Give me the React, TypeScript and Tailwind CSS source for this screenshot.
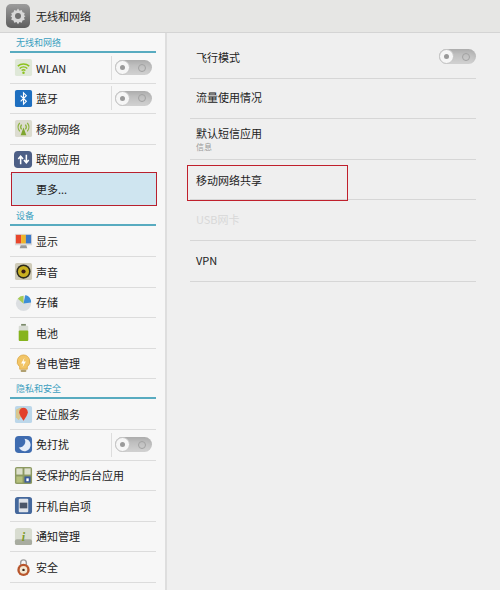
import type { ReactNode } from "react";

const Toggle = () => (
  <div className="w-[37px] h-[15px] rounded-full bg-gradient-to-b from-[#b4b4b4] to-[#d2d2d2] flex items-center justify-between shadow-inner">
    <div className="w-[15px] h-[15px] rounded-full bg-[#f6f6f6] border border-[#c4c4c4] flex items-center justify-center">
      <div className="w-[5px] h-[5px] rounded-full bg-[#9a9a9a]" />
    </div>
    <div className="w-[8px] h-[8px] rounded-full border border-[#a2a2a2] mr-[6px]" />
  </div>
);

const Icon = ({ children }: { children: ReactNode }) => (
  <svg viewBox="0 0 20 20" className="w-[19px] h-[19px] shrink-0">
    {children}
  </svg>
);

const icons: Record<string, ReactNode> = {
  wlan: (
    <>
      <rect x="1" y="1" width="18" height="18" rx="2" fill="#dfe8d8" />
      <path d="M4 8.500a9 9 0 0 1 12 0M6 11a6 6 0 0 1 8 0M8 13.200a3 3 0 0 1 4 0" fill="none" stroke="#8dc21f" strokeWidth="1.600" />
      <circle cx="10" cy="15.500" r="1.300" fill="#8dc21f" />
    </>
  ),
  bt: (
    <>
      <rect x="1" y="1" width="18" height="18" rx="2" fill="#1e6fc0" />
      <path d="M7 7l6 6-3 3V4l3 3-6 6" fill="none" stroke="#fff" strokeWidth="1.200" />
    </>
  ),
  mobile: (
    <>
      <rect x="1" y="1" width="18" height="18" rx="2" fill="#dcdcd0" />
      <path d="M10 9l-3 8h6z" fill="#7fa630" />
      <path d="M6 4a7 7 0 0 0 0 9M14 4a7 7 0 0 1 0 9M8 6a4 4 0 0 0 0 5M12 6a4 4 0 0 1 0 5" fill="none" stroke="#8bb23a" strokeWidth="1.300" />
    </>
  ),
  net: (
    <>
      <rect x="0" y="1" width="19" height="18" rx="4" fill="#4d5f86" />
      <path d="M7 15V7M4.500 9.500L7 6.500l2.500 3M13 5v8M10.500 10.500L13 13.500l2.500-3" fill="none" stroke="#fff" strokeWidth="1.600" />
    </>
  ),
  display: (
    <>
      <rect x="1" y="2" width="18" height="12" fill="#d9d9d9" />
      <rect x="2" y="3" width="5.500" height="9" fill="#e8462c" />
      <rect x="7.500" y="3" width="5" height="9" fill="#f0b429" />
      <rect x="12.500" y="3" width="5.500" height="9" fill="#3c78c8" />
      <path d="M7 14h6l1 3H6z" fill="#9a9a9a" />
    </>
  ),
  sound: (
    <>
      <rect x="1" y="1" width="18" height="18" rx="2" fill="#cfcbb8" />
      <circle cx="10" cy="10" r="7.500" fill="#2c2a1c" />
      <circle cx="10" cy="10" r="5.800" fill="#c8b020" />
      <circle cx="10" cy="10" r="2.200" fill="#3a1c14" />
    </>
  ),
  storage: (
    <>
      <circle cx="10" cy="11" r="8" fill="#dcdfe2" />
      <path d="M10 11L12 2a8 8 0 0 1 6 8z" fill="#3d8fd8" />
      <path d="M10 11L4 6a8 8 0 0 1 6-3z" fill="#a6cc52" />
    </>
  ),
  battery: (
    <>
      <rect x="7.500" y="1" width="5" height="2" fill="#7a8a6a" />
      <rect x="5" y="3" width="10" height="16" rx="1" fill="#d8dcd4" />
      <rect x="5" y="8" width="10" height="11" rx="1" fill="#86b41e" />
    </>
  ),
  power: (
    <>
      <path d="M10 1a7 7 0 0 0-4 12.500V16h8v-2.500A7 7 0 0 0 10 1z" fill="#f2c566" stroke="#d9a441" strokeWidth="0.800" />
      <path d="M11 4L7.500 10H10l-1 4 3.500-6H10z" fill="#fff" />
      <rect x="7" y="16.500" width="6" height="2.500" rx="1" fill="#b0a070" />
    </>
  ),
  location: (
    <>
      <rect x="1" y="1" width="18" height="18" rx="2" fill="#bcd7ea" />
      <path d="M2 5l6-3 2 6-5 8-3-3z" fill="#d8c890" />
      <path d="M10 3a4.500 4.500 0 0 1 4.500 4.500c0 3-4.500 9-4.500 9s-4.500-6-4.500-9A4.500 4.500 0 0 1 10 3z" fill="#e2402c" />
    </>
  ),
  dnd: (
    <>
      <rect x="1" y="1" width="18" height="18" rx="4" fill="#3f6cb0" />
      <path d="M11 4a6.500 6.500 0 1 1-6 9 6 6 0 0 0 6-9z" fill="#e6edf8" />
    </>
  ),
  protect: (
    <>
      <rect x="1" y="1" width="18" height="18" rx="2" fill="#8d9a62" />
      <rect x="2.500" y="2.500" width="6.500" height="6.500" fill="#dde0cc" />
      <rect x="11" y="2.500" width="6.500" height="6.500" fill="#dde0cc" />
      <rect x="2.500" y="11" width="6.500" height="6.500" fill="#b5c07c" />
      <rect x="11" y="11" width="6.500" height="6.500" fill="#3c5c9c" />
      <rect x="13" y="13" width="2.500" height="3" fill="#fff" />
    </>
  ),
  boot: (
    <>
      <rect x="1" y="1" width="18" height="18" rx="3" fill="#45689c" />
      <rect x="5" y="3" width="10" height="14" rx="1" fill="#e0e4ea" />
      <rect x="6" y="7" width="8" height="6" fill="#4c5668" />
    </>
  ),
  notify: (
    <>
      <rect x="1" y="1" width="18" height="18" rx="3" fill="#d8dcd0" />
      <rect x="1" y="13" width="18" height="6" rx="2" fill="#a8aca0" />
      <text x="10" y="15" textAnchor="middle" fontSize="13" fontStyle="italic" fontWeight="700" fontFamily="Liberation Serif, serif" fill="#7f9a2a">i</text>
    </>
  ),
  security: (
    <>
      <path d="M7 8V5a3 3 0 0 1 6 0v3" fill="none" stroke="#9a9a9a" strokeWidth="1.500" />
      <circle cx="10" cy="12.500" r="6.500" fill="#b8562c" />
      <circle cx="10" cy="12.500" r="4" fill="#f2e6d0" />
      <circle cx="10" cy="12.500" r="1.300" fill="#3a2418" />
    </>
  ),
};

const Row = ({ icon, label, toggle }: { icon: string; label: string; toggle?: boolean }) => (
  <div className="h-[30.6px] border-b border-[#dcdcdc] flex items-center pl-[4px] gap-[3px]">
    <Icon>{icons[icon]}</Icon>
    <span className="flex-1 text-[11px] text-[#222]">{label}</span>
    {toggle && (
      <div className="h-[24px] border-l border-[#dddddd] pl-[3px] pr-[4px] flex items-center">
        <Toggle />
      </div>
    )}
  </div>
);

const Section = ({ title, className }: { title: string; className?: string }) => (
  <div className={`h-[19px] border-b-[2px] border-[#58abc0] flex items-center pl-[6px] text-[9px] text-[#3c9fc0] ${className ?? ""}`}>
    {title}
  </div>
);

const PanelRow = ({ label, sub, dim, toggle, mark }: { label: string; sub?: string; dim?: boolean; toggle?: boolean; mark?: boolean }) => (
  <div className={`relative h-[40.6px] border-b border-[#d6d6d6] flex pl-[6px] ${sub ? "flex-col justify-start pt-[6px]" : mark ? "flex-col justify-start pt-[12px]" : "items-center justify-between pb-[2px]"}`}>
    <span className={`text-[11px] leading-[16px] ${dim ? "text-[#d8d8d8]" : "text-[#222]"}`}>{label}</span>
    {sub && <span className="text-[8px] leading-[12px] text-[#999]">{sub}</span>}
    {toggle && <Toggle />}
    {mark && <div className="absolute left-[-3px] top-[5px] w-[161px] h-[36px] border border-[#c0202c]" />}
  </div>
);

export default function App() {
  return (
    <div className="w-[500px] h-[590px] overflow-hidden flex flex-col bg-[#f4f4f4] font-['Noto_Sans_CJK_SC','Liberation_Sans',sans-serif]">
      <header className="h-[33px] shrink-0 bg-[#e6e6e4] border-b border-[#d4d4d4] flex items-center pl-[6px] gap-[6px]">
        <div className="w-[24px] h-[24px] rounded-[5px] bg-gradient-to-b from-[#9c9c9c] to-[#5e5e5e] flex items-center justify-center">
          <svg viewBox="0 0 24 24" className="w-[18px] h-[18px]">
            <path d="M12 2l2 3 3-1 1 3 3 1-1 3 2 1-2 2 1 3-3 1-1 3-3-1-2 3-2-3-3 1-1-3-3-1 1-3-2-2 2-1-1-3 3-1 1-3 3 1z" fill="#d8d8d8" />
            <circle cx="12" cy="12" r="4" fill="#707070" />
          </svg>
        </div>
        <span className="text-[11px] text-[#222]">无线和网络</span>
      </header>
      <div className="flex-1 flex min-h-0">
        <aside className="w-[167px] shrink-0 pl-[10px] pr-[9px] pt-[1px] bg-[#f7f7f7] border-r-[2px] border-[#dedede]">
          <Section title="无线和网络" />
          <Row icon="wlan" label="WLAN" toggle />
          <Row icon="bt" label="蓝牙" toggle />
          <Row icon="mobile" label="移动网络" />
          <Row icon="net" label="联网应用" />
          <div className="h-[34px] -mt-[3px] ml-[1px] -mr-[1px] bg-[#cfe5f0] border border-[#b8202e] flex items-center pl-[24px] text-[11px] text-[#222]">
            更多...
          </div>
          <Section title="设备" className="mt-[1px]" />
          <Row icon="display" label="显示" />
          <Row icon="sound" label="声音" />
          <Row icon="storage" label="存储" />
          <Row icon="battery" label="电池" />
          <Row icon="power" label="省电管理" />
          <Section title="隐私和安全" className="mt-[1px]" />
          <Row icon="location" label="定位服务" />
          <Row icon="dnd" label="免打扰" toggle />
          <Row icon="protect" label="受保护的后台应用" />
          <Row icon="boot" label="开机自启项" />
          <Row icon="notify" label="通知管理" />
          <Row icon="security" label="安全" />
        </aside>
        <main className="flex-1 pl-[23px] pr-[24px] pt-[5px] bg-[#efefef]">
          <PanelRow label="飞行模式" toggle />
          <PanelRow label="流量使用情况" />
          <PanelRow label="默认短信应用" sub="信息" />
          <PanelRow label="移动网络共享" mark />
          <PanelRow label="USB网卡" dim />
          <PanelRow label="VPN" />
        </main>
      </div>
    </div>
  );
}
